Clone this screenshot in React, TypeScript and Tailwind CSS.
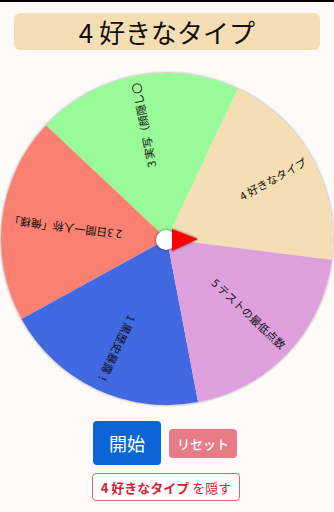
const CX = 166;
const CY = 166;
const R = 166;

const segments = [
  { label: "4 好きなタイプ", color: "#f5deb3", from: -64.8, to: 7.2 },
  { label: "3 実写（顔隠し〇", color: "#98fb98", from: -136.8, to: -64.8 },
  { label: "2 3日間一人称「俺様」", color: "#fa8072", from: 151.2, to: 223.2 },
  { label: "1 黒歴史暴露！", color: "#4169e1", from: 79.2, to: 151.2 },
  { label: "5 テストの最低点数", color: "#dda0dd", from: 7.2, to: 79.2 },
];

function point(deg: number, r: number) {
  const a = (deg * Math.PI) / 180;
  return `${(CX + r * Math.cos(a)).toFixed(2)} ${(CY + r * Math.sin(a)).toFixed(2)}`;
}

function Wheel() {
  return (
    <div className="relative mx-auto w-[332px] h-[332px] rounded-full shadow-[0_0_3px_rgba(0,0,0,0.45)]">
      <svg width="332" height="332" viewBox="0 0 332 332" className="block">
        {segments.map((s) => (
          <path
            key={s.label}
            d={`M ${CX} ${CY} L ${point(s.from, R)} A ${R} ${R} 0 0 1 ${point(s.to, R)} Z`}
            fill={s.color}
          />
        ))}
        {segments.map((s) => {
          const mid = (s.from + s.to) / 2;
          return (
            <text
              key={s.label + "-t"}
              x={CX + 159}
              y={CY}
              transform={`rotate(${mid} ${CX} ${CY})`}
              textAnchor="end"
              dominantBaseline="middle"
              fontSize="11"
              fill="#111"
              style={{ fontFamily: '"Noto Sans CJK JP", "Noto Sans", sans-serif' }}
            >
              {s.label}
            </text>
          );
        })}
        <g style={{ filter: "drop-shadow(0 0 1.5px rgba(0,0,0,0.55))" }}>
          <circle cx={CX - 1} cy={CY + 1} r="10" fill="#ffffff" />
          <polygon points={`${CX + 5},${CY - 10} ${CX + 31},${CY} ${CX + 5},${CY + 12}`} fill="#ff0000" />
        </g>
      </svg>
    </div>
  );
}

export default function App() {
  return (
    <div
      className="w-full min-h-[512px] bg-[#fffafa] overflow-hidden"
      style={{ fontFamily: '"Noto Sans CJK JP", "Noto Sans", sans-serif' }}
    >
      <div className="h-[2px] bg-black" />

      {/* Title */}
      <div className="mx-[14px] mt-[11px] h-[37px] rounded-md bg-[#f5deb3] flex items-center justify-center text-[26px] leading-none text-[#111]">
        4 好きなタイプ
      </div>

      <div className="mt-[23px]">
        <Wheel />
      </div>

      {/* Controls */}
      <div className="mt-[16px] flex items-center justify-center gap-2 pr-[4px]">
        <button className="w-[68px] h-[44px] rounded-[4px] bg-[#0b65d6] text-white text-[18px] leading-none">
          開始
        </button>
        <button className="w-[68px] h-[29px] rounded-[4px] bg-[#e77b86] text-white text-[13px] font-medium leading-none">
          リセット
        </button>
      </div>

      <div className="mt-[8px] flex justify-center pr-[2px]">
        <button className="w-[148px] h-[28px] rounded-[4px] border border-[#e06470] bg-white text-[#d42035] text-[13px] leading-none">
          <span className="font-bold">4 好きなタイプ</span> を隠す
        </button>
      </div>
    </div>
  );
}
